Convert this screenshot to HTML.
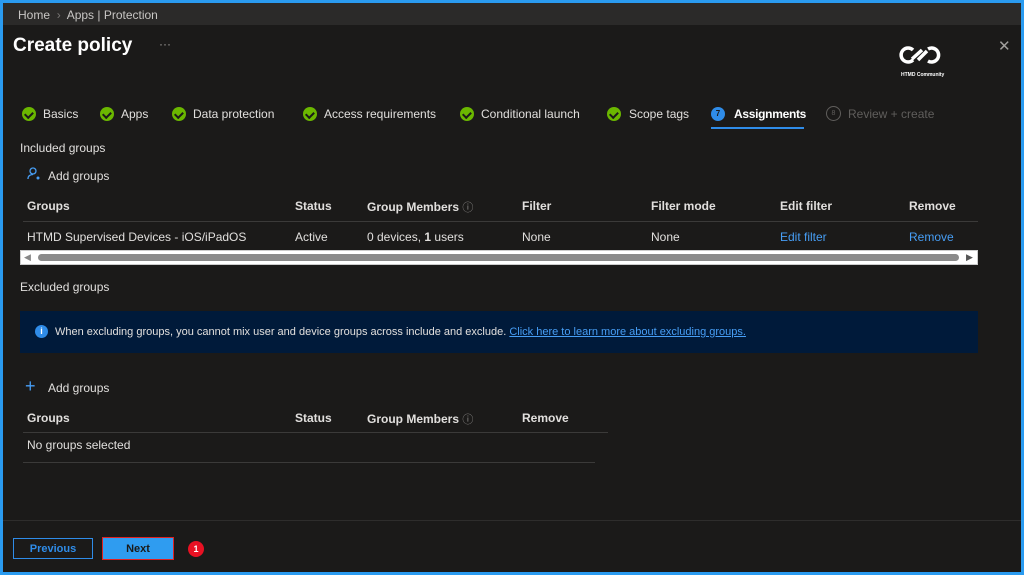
<!DOCTYPE html>
<html><head><meta charset="utf-8"><style>
*{margin:0;padding:0;box-sizing:border-box}
body{width:1024px;height:575px;background:#2a9bf0;font-family:"Liberation Sans",sans-serif;overflow:hidden;position:relative}
#f{position:absolute;left:3px;top:3px;width:1018px;height:569px;background:#1b1a19;overflow:hidden}
.a{position:absolute;white-space:nowrap;color:#e1dfdd;font-size:12px}
.chk{display:inline-block;width:14px;height:14px;border-radius:50%;background:#6bb700;position:absolute}
.chk:after{content:"";position:absolute;left:4px;top:2.5px;width:3.5px;height:6px;border:solid #1b1a19;border-width:0 2px 2px 0;transform:rotate(45deg)}
.b{font-weight:bold}
.ln{color:#479ef5}
.hr{position:absolute;height:1px;background:#3b3a39}
</style></head><body><div id="f">
<div style="position:absolute;left:0;top:0;width:1018px;height:22px;background:#2b2a29"></div>
<div class="a" style="left:15px;top:5px;color:#c8c6c4">Home &nbsp;<span style="color:#797775">›</span>&nbsp; Apps | Protection</div>
<div class="a" style="left:10px;top:32px;font-size:19px;font-weight:bold;color:#fff">Create policy</div>
<div class="a" style="left:156px;top:34px;color:#a19f9d">···</div>
<div class="a" style="left:995px;top:34px;font-size:15px;color:#a19f9d">✕</div>
<svg style="position:absolute;left:895px;top:41px" width="48" height="26" viewBox="0 0 48 26"><path d="M15 6a7 7 0 1 0 0 10M14 15l10-9M20 16l9-9M30 5a7 7 0 1 1 0 12" stroke="#fff" stroke-width="3.5" fill="none"/></svg>
<div class="a" style="left:898px;top:69px;font-size:5px;color:#fff;font-weight:bold">HTMD Community</div>
<span class="chk" style="left:19px;top:104px"></span><div class="a" style="left:40px;top:104px">Basics</div>
<span class="chk" style="left:97px;top:104px"></span><div class="a" style="left:118px;top:104px">Apps</div>
<span class="chk" style="left:169px;top:104px"></span><div class="a" style="left:190px;top:104px">Data protection</div>
<span class="chk" style="left:300px;top:104px"></span><div class="a" style="left:321px;top:104px">Access requirements</div>
<span class="chk" style="left:457px;top:104px"></span><div class="a" style="left:478px;top:104px">Conditional launch</div>
<span class="chk" style="left:604px;top:104px"></span><div class="a" style="left:626px;top:104px">Scope tags</div>
<span style="position:absolute;left:708px;top:104px;width:14px;height:14px;border-radius:50%;background:#2f8ce8;color:#1b1a19;font-size:8px;text-align:center;line-height:14px;font-weight:bold">7</span>
<div class="a b" style="left:731px;top:104px;color:#fff;letter-spacing:-0.3px">Assignments</div>
<div style="position:absolute;left:708px;top:124px;width:93px;height:2px;background:#2f8ce8"></div>
<span style="position:absolute;left:823px;top:103px;width:15px;height:15px;border-radius:50%;border:1px solid #605e5c;color:#605e5c;font-size:7px;text-align:center;line-height:13px">8</span>
<div class="a" style="left:845px;top:104px;color:#605e5c">Review + create</div>
<div class="a" style="left:17px;top:138px">Included groups</div>
<svg style="position:absolute;left:24px;top:164px" width="14" height="14" viewBox="0 0 14 14"><circle cx="6" cy="4" r="3" stroke="#479ef5" stroke-width="1.3" fill="none"/><path d="M1 12c0-3 2-4.5 5-4.5" stroke="#479ef5" stroke-width="1.3" fill="none"/><circle cx="11" cy="11" r="1.5" fill="#479ef5"/></svg>
<div class="a" style="left:45px;top:166px">Add groups</div>
<div class="a b" style="left:24px;top:196px">Groups</div>
<div class="a b" style="left:292px;top:196px">Status</div>
<div class="a b" style="left:364px;top:196px">Group Members <span style="font-weight:normal;color:#8a8886;font-size:11px">ⓘ</span></div>
<div class="a b" style="left:519px;top:196px">Filter</div>
<div class="a b" style="left:648px;top:196px">Filter mode</div>
<div class="a b" style="left:777px;top:196px">Edit filter</div>
<div class="a b" style="left:906px;top:196px">Remove</div>
<div class="hr" style="left:20px;top:218px;width:955px"></div>
<div class="a" style="left:24px;top:227px">HTMD Supervised Devices - iOS/iPadOS</div>
<div class="a" style="left:292px;top:227px">Active</div>
<div class="a" style="left:364px;top:227px">0 devices, <b>1</b> users</div>
<div class="a" style="left:519px;top:227px">None</div>
<div class="a" style="left:648px;top:227px">None</div>
<div class="a ln" style="left:777px;top:227px">Edit filter</div>
<div class="a ln" style="left:906px;top:227px">Remove</div>
<div style="position:absolute;left:17px;top:247px;width:958px;height:15px;background:#fff;border:1px solid #ccc"></div>
<div style="position:absolute;left:35px;top:251px;width:921px;height:7px;background:#8a8a8a;border-radius:4px"></div>
<div class="a" style="left:21px;top:249px;font-size:9px;color:#888">◀</div>
<div class="a" style="left:963px;top:249px;font-size:9px;color:#555">▶</div>
<div class="a" style="left:17px;top:277px">Excluded groups</div>
<div style="position:absolute;left:17px;top:308px;width:958px;height:42px;background:#001a3a"></div>
<span style="position:absolute;left:32px;top:322px;width:13px;height:13px;border-radius:50%;background:#2f8ce8;color:#fff;font-size:9px;font-weight:bold;text-align:center;line-height:13px">i</span>
<div class="a" style="left:52px;top:323px;font-size:11px">When excluding groups, you cannot mix user and device groups across include and exclude. <span class="ln" style="text-decoration:underline">Click here to learn more about excluding groups.</span></div>
<div class="a" style="left:22px;top:373px;font-size:18px;color:#479ef5;font-weight:300">+</div>
<div class="a" style="left:45px;top:378px">Add groups</div>
<div class="a b" style="left:24px;top:408px">Groups</div>
<div class="a b" style="left:292px;top:408px">Status</div>
<div class="a b" style="left:364px;top:408px">Group Members <span style="font-weight:normal;color:#8a8886;font-size:11px">ⓘ</span></div>
<div class="a b" style="left:519px;top:408px">Remove</div>
<div class="hr" style="left:20px;top:429px;width:585px"></div>
<div class="a" style="left:24px;top:435px">No groups selected</div>
<div class="hr" style="left:20px;top:459px;width:572px"></div>
<div class="hr" style="left:0;top:517px;width:1018px;background:#2e2d2c"></div>
<div style="position:absolute;left:10px;top:535px;width:80px;height:21px;border:1px solid #2f8ce8;color:#2f8ce8;font-size:11px;font-weight:bold;text-align:center;line-height:21px">Previous</div>
<div style="position:absolute;left:99px;top:534px;width:72px;height:23px;border:1.5px solid #e02020;background:#2f9cf0;color:#1b1a19;font-size:11px;font-weight:bold;text-align:center;line-height:22px">Next</div>
<span style="position:absolute;left:185px;top:538px;width:16px;height:16px;border-radius:50%;background:#e81123;color:#fff;font-size:9px;font-weight:bold;text-align:center;line-height:16px">1</span>
</div></body></html>
